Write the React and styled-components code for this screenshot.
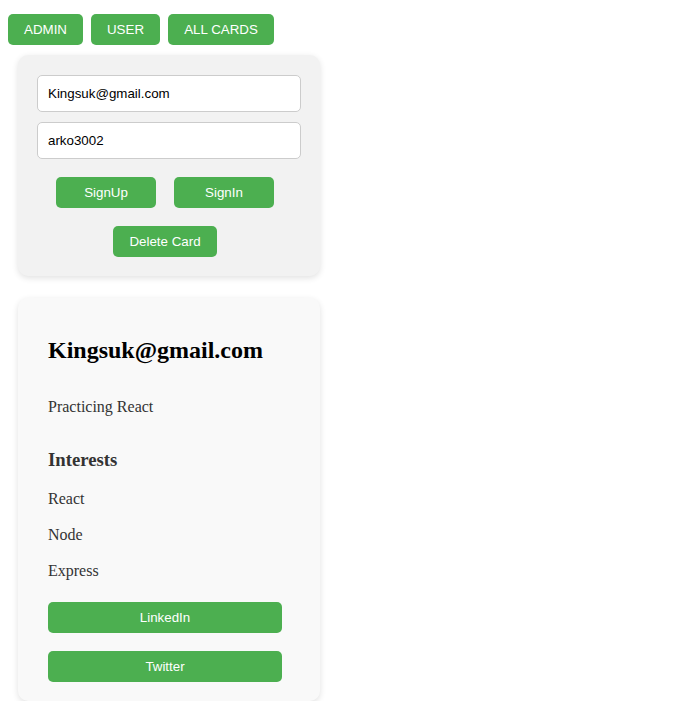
import React from 'react';
import styled, { createGlobalStyle } from 'styled-components';

const GREEN = '#4caf50';

const GlobalStyle = createGlobalStyle`
  body {
    margin: 8px;
    background: #fff;
    font-family: "Liberation Serif", serif;
  }
`;

const Nav = styled.nav`
  display: flex;
  gap: 8px;
  padding-top: 6px;
`;

const Button = styled.button`
  box-sizing: border-box;
  height: 31px;
  width: ${({ $width }) => $width}px;
  padding: 0;
  border: 0;
  border-radius: 5px;
  background-color: ${GREEN};
  color: #fff;
  font-family: "Liberation Sans", Arial, sans-serif;
  font-size: 13.33px;
  white-space: nowrap;
  cursor: pointer;
  flex-shrink: 0;
`;

const Panel = styled.div`
  box-sizing: border-box;
  width: 302px;
  margin: ${({ $top }) => $top}px 0 0 10px;
  border-radius: 10px;
  background: ${({ $bg }) => $bg};
  box-shadow: 0 2px 6px rgba(0, 0, 0, 0.12);
`;

const Form = styled.form`
  display: flex;
  flex-direction: column;
  padding: 20px 19px 19px;
`;

const Input = styled.input`
  box-sizing: border-box;
  width: 100%;
  height: 37px;
  margin-bottom: 10px;
  padding: 0 10px;
  border: 1px solid #ccc;
  border-radius: 5px;
  background: #fff;
  color: #000;
  font-family: "Liberation Sans", Arial, sans-serif;
  font-size: 13.33px;
  outline: none;
`;

const ButtonRow = styled.div`
  display: flex;
  justify-content: center;
  gap: 18px;
  padding-right: 8px;
  margin-top: ${({ $top }) => $top}px;
`;

const Profile = styled.div`
  display: flex;
  flex-direction: column;
  padding: 38px 30px 19px;
  color: #333;
`;

const Name = styled.h2`
  margin: 0 0 33px;
  font-size: 24px;
  line-height: 28px;
  color: #000;
`;

const Bio = styled.p`
  margin: 0 0 32px;
  font-size: 16px;
  line-height: 20px;
`;

const SectionTitle = styled.h3`
  margin: 0 0 18px;
  font-size: 18.72px;
  line-height: 22px;
`;

const Interest = styled.p`
  margin: 0 0 16px;
  font-size: 16px;
  line-height: 20px;
`;

const Links = styled.div`
  display: flex;
  flex-direction: column;
  gap: 18px;
  margin-top: 5px;
`;

const navItems = [
  { label: 'ADMIN', width: 75 },
  { label: 'USER', width: 69 },
  { label: 'ALL CARDS', width: 106 },
];

const interests = ['React', 'Node', 'Express'];

const App = () => {
  return (
    <>
      <GlobalStyle />
      <Nav>
        {navItems.map((item) => (
          <Button key={item.label} $width={item.width}>
            {item.label}
          </Button>
        ))}
      </Nav>

      <Panel $top={10} $bg="#f2f2f2">
        <Form onSubmit={(e) => e.preventDefault()}>
          <Input type="email" defaultValue="Kingsuk@gmail.com" />
          <Input type="text" defaultValue="arko3002" />
          <ButtonRow $top={8}>
            <Button type="button" $width={100}>SignUp</Button>
            <Button type="button" $width={100}>SignIn</Button>
          </ButtonRow>
          <ButtonRow $top={18}>
            <Button type="button" $width={104}>Delete Card</Button>
          </ButtonRow>
        </Form>
      </Panel>

      <Panel $top={22} $bg="#f9f9f9">
        <Profile>
          <Name>Kingsuk@gmail.com</Name>
          <Bio>Practicing React</Bio>
          <SectionTitle>Interests</SectionTitle>
          {interests.map((item) => (
            <Interest key={item}>{item}</Interest>
          ))}
          <Links>
            <Button $width={234}>LinkedIn</Button>
            <Button $width={234}>Twitter</Button>
          </Links>
        </Profile>
      </Panel>
    </>
  );
};

export default App;
